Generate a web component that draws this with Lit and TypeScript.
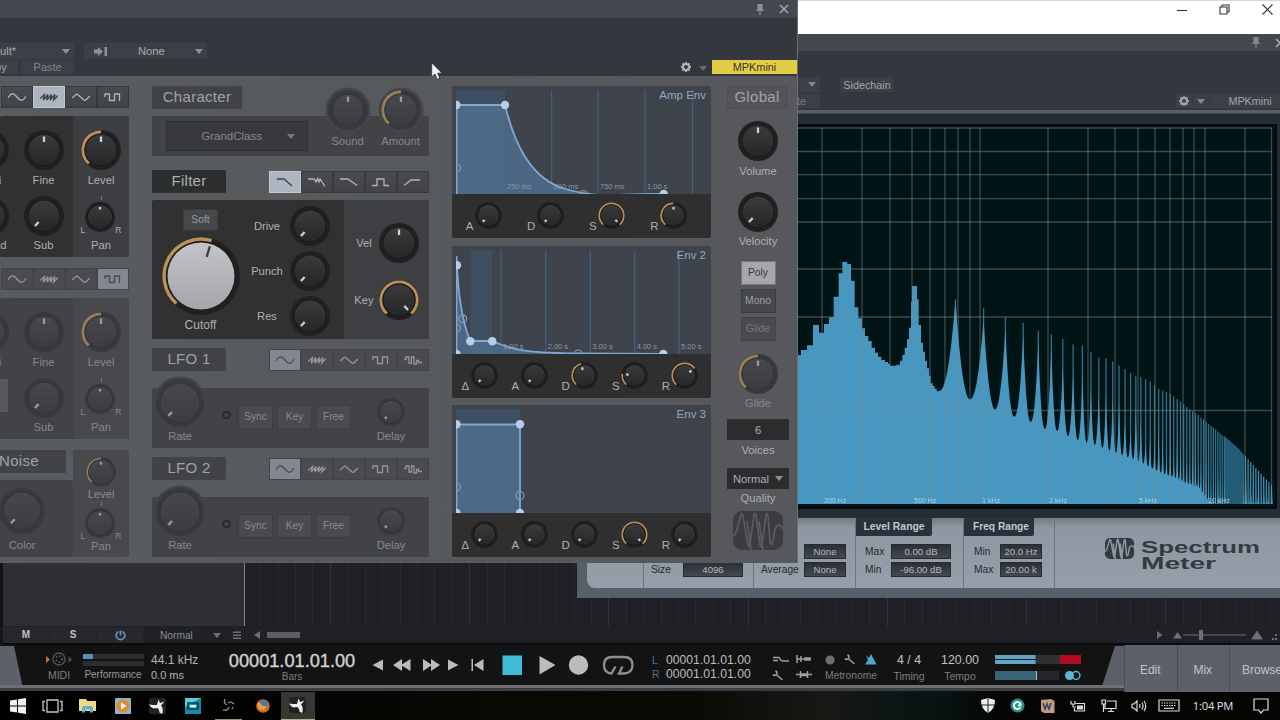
import { LitElement, html, css, svg } from 'lit';
import { customElement, property } from 'lit/decorators.js';
import { classMap } from 'lit/directives/class-map.js';

const WAVES: Record<string, string> = {
  sine: 'M0 6C3 0 6 1 9 5S15 10 18 4',
  saw: 'M0 6.500L4.500 2.500L3.200 8L8 2.500L6.700 8L11.500 2.500L10.200 8L15 2.500L13.700 8L18 3.500',
  tri: 'M0 6L4 2.500Q5 1.800 6 2.800L12 8Q13 8.800 14 7.800L18 4',
  square: 'M1 5V2H5.500V8.500H10.500V2H15.500V9',
  random: 'M0 4.500H2V2H5V8H7.500V2H10V9H12.500V5.500H14.500V7.500H18',
  lp24: 'M1 2H8L16 9',
  lp24b: 'M0 2H6L8 5L9.500 1.500L11 5L12 2L17 9.500',
  lp12: 'M0 2H8L17 8.500',
  bp: 'M0 8.500H5V2H12V8.500H17',
  hp: 'M0 8.500L7 3H16',
};

const OSC_WAVES = ['sine', 'saw', 'tri', 'square'];
const LFO_WAVES = ['sine', 'saw', 'tri', 'square', 'random'];
const FILTERS = ['lp24', 'lp24b', 'lp12', 'bp', 'hp'];

@customElement('synth-knob')
export class SynthKnob extends LitElement {
  @property({ type: Number }) size = 40;
  @property({ type: Number }) value = 0;
  @property({ type: Boolean }) arc = false;
  @property({ type: Boolean }) big = false;

  static styles = css`
    :host {
      display: block;
      line-height: 0;
    }
    svg {
      display: block;
      overflow: visible;
    }
    .halo { fill: var(--halo, transparent); }
    .ring { fill: var(--ring, #202021); }
    .edge { fill: var(--edge, #171718); }
    .a { stop-color: var(--cap-a, #3a3b3d); }
    .b { stop-color: var(--cap-b, #252627); }
    .la { stop-color: #c3c4c8; }
    .lb { stop-color: #a5a6ab; }
    .arc {
      fill: none;
      stroke: var(--arc, #be9058);
    }
    .tick { stroke: var(--tick, #d0d0d0); }
    .dark { stroke: #3c3c3e; }
  `;

  render() {
    const r = this.size / 2;
    const small = r < 16;
    const cap = this.big ? r - 5.5 : small ? r - 3 : r - 4.5;
    const w = this.big ? 3.4 : small ? 2 : 2.8;
    const ar = r - w / 2 - 0.4;
    const angle = -138 + this.value * 276;
    const at = (deg: number) => {
      const rad = (deg * Math.PI) / 180;
      return `${(Math.sin(rad) * ar).toFixed(2)} ${(-Math.cos(rad) * ar).toFixed(2)}`;
    };
    return html`
      <svg width=${this.size} height=${this.size} viewBox="${-r} ${-r} ${this.size} ${this.size}">
        <defs>
          <linearGradient id="cap" x1="0" y1="0" x2="0" y2="1">
            <stop offset="0" class=${this.big ? 'la' : 'a'}></stop>
            <stop offset="1" class=${this.big ? 'lb' : 'b'}></stop>
          </linearGradient>
        </defs>
        <circle class="halo" r=${r + 2.5}></circle>
        <circle class="ring" r=${r}></circle>
        ${this.arc
          ? svg`<path class="arc" stroke-width=${w}
              d="M${at(-138)}A${ar} ${ar} 0 ${angle > 42 ? 1 : 0} 1 ${at(angle)}"></path>`
          : ''}
        <circle class="edge" r=${cap + 0.8}></circle>
        <circle r=${cap} fill="url(#cap)"></circle>
        <line
          class="tick ${this.big ? 'dark' : ''}"
          stroke-width=${small ? 2.2 : 2.3}
          transform="rotate(${angle})"
          x1="0" x2="0"
          y1=${this.big ? -r + 8 : -cap + 2}
          y2=${this.big ? -r + 19 : small ? -cap + 4.6 : -cap + 7.5}
        ></line>
      </svg>
    `;
  }
}

const steps = [
  [0, 345], [36, 330], [54, 316], [72, 255], [90, 278], [105, 252], [120, 232], [134, 170],
  [149, 100], [160, 66], [175, 72], [186, 122], [197, 202], [208, 235], [219, 265], [228, 288],
  [238, 303], [248, 323], [258, 338], [267, 350], [277, 360], [288, 366], [297, 371], [303, 377],
  [322, 374], [333, 362], [340, 345], [347, 323], [354, 298], [360, 263], [366, 185], [369, 138],
  [384, 178], [389, 255], [396, 308], [402, 335], [408, 362], [414, 385], [420, 408], [425, 430],
  [431, 438], [437, 446], [443, 453],
].map(([x, y]) => [x / 3 + 790, y / 3 + 240]);

const crest = [
  [956, 299], [984, 308], [1006, 317.5], [1024, 323], [1039, 330.5], [1053, 334.5], [1064, 339],
  [1074, 344.5], [1084, 345.5], [1092, 352], [1100, 358], [1107, 358], [1114, 362], [1126, 369],
  [1138, 377], [1142, 377], [1152, 382], [1160, 389], [1172, 394], [1182, 402], [1190, 409],
  [1198, 414], [1207, 421.7], [1215, 428], [1223, 435], [1230, 440], [1240, 449], [1248, 458],
  [1257, 468], [1265, 477], [1273, 485],
];

const floor = [
  [939, 391], [972, 400], [995, 409.5], [1016, 417], [1032, 422], [1046, 429], [1059, 431],
  [1070, 436.5], [1079, 440], [1096, 445], [1117, 453], [1139, 461], [1163, 473], [1180, 479],
  [1187, 483], [1200, 487], [1208, 499], [1214, 504], [1280, 504],
];

function lerp(table: number[][], x: number) {
  const i = table.findIndex(p => p[0] >= x);
  if (i < 0) return table[table.length - 1][1];
  if (i === 0) return table[0][1];
  const [x0, y0] = table[i - 1];
  const [x1, y1] = table[i];
  return y0 + ((y1 - y0) * (x - x0)) / (x1 - x0);
}

const harmonic = (n: number) => 981.5 + 225 * Math.log10(0.258 * n);

function buildSpectrum() {
  let body = 'M790 504';
  let y = 504;
  for (const [x, ny] of steps) {
    body += `L${x} ${y}L${x} ${ny}`;
    y = ny;
  }
  let spikes = '';
  for (let n = 3; n <= 77; n++) {
    const x = harmonic(n);
    const left = (harmonic(n - 1) + x) / 2 + (n === 3 ? 3 : 0);
    const right = (x + harmonic(n + 1)) / 2 + (n < 5 ? 1.5 : 0);
    const top = lerp(crest, x);
    const base = lerp(floor, left);
    const nextBase = lerp(floor, right);
    let share = n < 4 ? 1 : n < 9 ? 0.88 : n < 12 ? 0.7 : n < 17 ? 0.6 : 0.42;
    if (n > 17) share += [0.1, -0.15, 0.02, -0.1, 0.25][n % 5];
    if (x > 1226 && x < 1244) share = 0;
    if (x >= 1244) share = [0.1, 0.7, 0.3, 0.95][n % 4];
    const peak = base - (base - top) * share;
    const bend = x > 1150 ? 3.5 : 2.3;
    for (let t = 0; t <= 1; t += 0.125) {
      body += `L${(left + (x - left) * t).toFixed(1)} ${(base - (base - peak) * Math.pow(t, bend)).toFixed(1)}`;
    }
    for (let t = 0.125; t <= 1; t += 0.125) {
      body += `L${(x + (right - x) * t).toFixed(1)} ${(nextBase - (nextBase - peak) * Math.pow(1 - t, bend)).toFixed(1)}`;
    }
    if (x < 1226) spikes += `M${x.toFixed(1)} ${top}V${base}`;
  }
  // harmonics run together up here, so the gaps fill in
  const tail = 'M1225 504V436L1230 440L1240 449L1245 455V504Z';
  let late = '';
  for (let x = 1246.5; x < 1273; x += 2.6) late += `M${x} ${lerp(crest, x)}V504`;
  return { body: body + 'L1273 504Z', spikes, tail, late };
}

const spectrum = buildSpectrum();
const GRID_X = [823, 863, 891, 913, 931, 946, 959, 971, 981, 1049, 1089, 1116, 1139, 1156, 1171, 1184, 1195, 1206, 1246, 1272.5];
const GRID_Y = [128, 151.5, 174.7, 198.7, 222, 269, 317, 410.5];
const FREQS: [number, string][] = [[825, '200 Hz'], [915, '500 Hz'], [983, '1 kHz'], [1050, '2 kHz'], [1140, '5 kHz'], [1209, '10 kHz']];

@customElement('spectrum-view')
export class SpectrumView extends LitElement {
  static styles = css`
    :host { display: block; }
    svg { display: block; }
    .bg { fill: #001416; }
    .body { fill: #4797c0; }
    .dimmed { fill: #255c75; }
    .spike { stroke: #2f708c; stroke-width: 1.3; fill: none; }
    .late { stroke: #4290b6; stroke-width: 1.2; fill: none; }
    .grid { stroke: #7f8685; stroke-opacity: 0.48; stroke-width: 1.3; }
    text {
      font: 7px 'Liberation Sans', sans-serif;
      fill: #c6dbe6;
      fill-opacity: 0.85;
    }
  `;

  render() {
    return html`
      <svg width="686" height="380" viewBox="590 126 686 380">
        <rect class="bg" x="590" y="126" width="686" height="380"></rect>
        <path class="dimmed" d=${spectrum.tail}></path>
        <path class="spike" d=${spectrum.spikes}></path>
        <path class="late" d=${spectrum.late}></path>
        <path class="body" d=${spectrum.body}></path>
        ${GRID_X.map(x => svg`<line class="grid" x1=${x} x2=${x} y1="128" y2="504"></line>`)}
        ${GRID_Y.map(y => svg`<line class="grid" x1="590" x2="1273" y1=${y} y2=${y}></line>`)}
        ${FREQS.map(([x, t]) => svg`<text x=${x} y="502.500">${t}</text>`)}
      </svg>
    `;
  }
}

interface Env {
  title: string;
  band: number[];
  fill: string;
  line: string;
  grid: [number, string?][];
  dots: number[][];
  rings: number[][];
  knobs: [string, number, boolean][];
}

const ENVS: Env[] = [
  {
    title: 'Amp Env',
    band: [0, 49],
    fill: 'M0 15H49C58 52 74 90 111 99.500S156 103.500 207 104H0Z',
    line: 'M.5 104V15H49C58 52 74 90 111 99.500S156 103.500 207 104',
    grid: [[49, '250 ms'], [95.7, '500 ms'], [142, '750 ms'], [189, '1.00 s'], [236.7]],
    dots: [[0.5, 15], [49, 15], [207.7, 104]],
    rings: [[0.5, 78], [127.5, 104.5]],
    knobs: [['A', 0, false], ['D', 0, false], ['S', 1, true], ['R', 0.5, true]],
  },
  {
    title: 'Env 2',
    band: [14.3, 36.3],
    fill: 'M0 8C2 50 7 78 14.300 91H36.300C60 102 80 103 122 103.500L207 104H0Z',
    line: 'M.5 104V6C2 50 7 74 14.300 91H36.300C60 102 80 103 122 103.500L207 104',
    grid: [[45, '1.00 s'], [89.7, '2.00 s'], [134.3, '3.00 s'], [178.7, '4.00 s'], [223, '5.00 s']],
    dots: [[1, 15.3], [0.5, 104], [14.3, 91.2], [36.3, 91.2], [207.3, 104]],
    rings: [[0.5, 78], [6.7, 68.8], [122.3, 104]],
    knobs: [['∆', 0, false], ['A', 0, false], ['D', 0.44, true], ['S', 0.2, true], ['R', 0.7, true]],
  },
  {
    title: 'Env 3',
    band: [0, 64],
    fill: 'M0 15H64V104H0Z',
    line: 'M.5 104V15.500H64V104',
    grid: [],
    dots: [[0.5, 15.3], [64, 15.3], [0.5, 104], [64, 104]],
    rings: [[0.5, 78], [64, 86.5]],
    knobs: [['∆', 0, false], ['A', 0, false], ['D', 0, false], ['S', 1, true], ['R', 0, false]],
  },
];

const pinIcon = () => html`<svg width="10" height="11" viewBox="0 0 10 11"><path class="ic" d="M2.500 0H7.500V5L9 7H5.600V11H4.400V7H1L2.500 5Z"></path></svg>`;
const closeIcon = () => html`<svg width="10" height="10" viewBox="0 0 10 10"><path class="st" d="M1 1L9 9M9 1L1 9"></path></svg>`;
const gearIcon = () => html`<svg width="12" height="12" viewBox="-6 -6 12 12">
  <circle class="gear" r="3"></circle>
  ${[0, 45, 90, 135].map(a => svg`<path class="teeth" transform="rotate(${a})" d="M0 -5V-3.500M0 3.500V5"></path>`)}
</svg>`;
const downIcon = () => html`<svg width="8" height="5" viewBox="0 0 8 5"><path class="ic" d="M0 0H8L4 5Z"></path></svg>`;
const logoIcon = (w: number, h: number) => html`<svg width=${w} height=${h} viewBox="0 0 50 39" preserveAspectRatio="none">
  <rect class="logo-bg" width="50" height="39" rx="9"></rect>
  <path class="logo-line" d="M0 25Q3 24 5 14L8 4Q9 1 10 5L15 34Q16 37 17 33L21 4Q22 0 23 4L27 34Q28 38 29 34L33 4Q34 1 35 5L37 30Q38 37 40 30L42 18Q46 10 50 18M14 10L18 39M26 10L30 39"></path>
</svg>`;
const wrenchIcon = () => html`<svg width="12" height="11" viewBox="0 0 12 11"><path class="st" d="M1 4.500Q2 6 4.500 4.800L10.500 10M4.500 4.800Q6 2 3.500 1"></path></svg>`;
const starIcon = () => html`<svg width="17" height="16" viewBox="0 0 17 16">
  <rect width="17" height="16" rx="2" fill="#222"></rect>
  <path fill="#eee" d="M0 6.500L4 7L8 7L9.500 1.500L11 5L15.500 3.500L12 7.500Q15 11 13 16L10.500 14.500Q10.500 11.500 8.500 10L4.500 10.500Q2 10 0 6.500Z"></path>
</svg>`;

@customElement('synth-window')
export class SynthWindow extends LitElement {
  static styles = css`
    :host {
      display: flex;
      flex-direction: column;
      width: 797px;
      height: 563px;
      overflow: hidden;
      background: linear-gradient(90deg, #585b5f, #56585b);
      color: #aeafb1;
      font: 11.2px/14px 'Liberation Sans', Arial, sans-serif;
      box-shadow: 1px 0 0 #6d6e70;
      white-space: nowrap;
    }
    .ic { fill: #8e9095; }
    .st { fill: none; stroke: #a2a4a8; stroke-width: 1.7; }
    .gear { fill: none; stroke: #b3b5b8; stroke-width: 2; }
    .teeth { stroke: #b3b5b8; stroke-width: 1.8; }
    .title {
      flex: none;
      height: 18px;
      background: #454850;
      display: flex;
      justify-content: flex-end;
      align-items: center;
      gap: 14px;
      padding-right: 8px;
    }
    .tools {
      flex: none;
      height: 58px;
      background: #35373e;
      display: flex;
      justify-content: space-between;
    }
    .presets { padding-top: 25px; }
    .row { display: flex; }
    .cell {
      background: #3d3f46;
      display: flex;
      align-items: center;
    }
    .cell.top { height: 16px; margin-bottom: 1px; }
    .cell.low { height: 14px; color: #808389; }
    .preset { width: 70px; padding-right: 4px; justify-content: space-between; color: #a9abae; }
    .link { width: 119px; margin-left: 10px; padding: 0 4px 0 0; color: #a9abae; }
    .link svg:first-child { margin: 0 31px 0 10px; }
    .link span { flex: 1; }
    .copy { width: 18px; margin-right: 3px; justify-content: flex-start; }
    .copy span { margin-left: -5px; color: #a0a2a6; }
    .paste { width: 53px; justify-content: center; }
    .device { display: flex; align-items: center; height: 14px; margin-top: 42px; }
    .device .sep { margin: 0 5px 0 7px; opacity: .6; }
    .tag {
      width: 85px;
      height: 14px;
      text-align: center;
      background: #e3cc45;
      color: #35342a;
      font-size: 10.9px;
    }
    .body { display: flex; align-items: flex-start; padding-top: 10px; }
    .oscs { width: 129px; overflow: hidden; }
    .mid { width: 277px; margin-left: 23px; }
    .envs { width: 259px; margin-left: 23px; }
    .global { width: 62px; margin-left: 16px; }
    .off {
      --ring: #38393c;
      --edge: #313235;
      --cap-a: #47484c;
      --cap-b: #3b3c40;
      --arc: #9a7c58;
      --tick: #9a9b9e;
      color: #87888b;
    }

    .waves { display: flex; height: 22px; }
    .waves span {
      flex: 1;
      display: flex;
      align-items: center;
      justify-content: center;
      background: linear-gradient(#4a4b4f, #424347);
      box-shadow: inset 0 0 0 1px #38393c;
    }
    .waves path { fill: none; stroke: #b3b4b6; stroke-width: 1.3; }
    .waves .sel { background: #adb5c0; box-shadow: inset 0 0 0 1px #c0c8d2; }
    .waves .sel path { stroke: #3c3f44; }
    .off .waves span { background: #494b4f; box-shadow: inset 0 0 0 1px #434448; }
    .off .waves path { stroke: #94969a; }
    .off .waves .sel { background: #83878f; }
    .off .waves .sel path { stroke: #474a50; }

    .panel { display: flex; border-radius: 2px; overflow: hidden; background: #313132; }
    .off .panel, .off.panel { background: #424347; }
    .osc { padding-left: 1px; }
    .osc .panel { height: 141px; margin: 8px 0 11px -1px; }
    .osc .main { width: 111px; margin-left: -39px; flex: none; padding-right: 1px; }
    .side { width: 56px; background: #3d3e41; padding-top: 14px; }
    .off .side { background: #48494c; }
    .main { padding-top: 14px; }
    .main .row > *, .side > * { width: 55px; }
    .side > * { width: 56px; }
    .knob { display: flex; flex-direction: column; align-items: center; gap: 3px; }
    .second { margin-top: 9px; gap: 2px; }
    .pan {
      height: 40px;
      display: flex;
      align-items: flex-end;
      gap: 0;
      font-size: 8.5px;
      line-height: 11px;
      background: linear-gradient(#77787a, #77787a) no-repeat 50% 0 / 1px 4px;
    }
    .pan synth-knob { margin-bottom: 4px; }
    .square {
      width: 29px;
      height: 33px;
      margin: 1px 0 6px 9px;
      background: #57585b;
    }
    .noise { display: flex; }
    .noise .head { width: 66px; text-align: left; text-indent: -1px; }
    .noise .panel { display: block; width: 73px; height: 77px; margin-top: 7px; padding-top: 8px; box-sizing: border-box; }
    .noise .knob.color { margin-left: -29px; gap: 4px; }
    .noise .side { background: #48494c; height: 107px; padding-top: 7px; box-sizing: border-box; border-radius: 2px; }
    .noise .side .knob { gap: 0; }
    .noise .side .second { margin-top: 1px; }
    .noise .side .second > span { margin-top: -3px; }

    .head {
      width: 74px;
      height: 23px;
      line-height: 22px;
      text-align: center;
      font-size: 15px;
      letter-spacing: .3px;
      background: #2d2e2f;
      color: #a9b0ab;
      border-radius: 1px;
    }
    .off .head { background: #424347; color: #a0a3a2; }
    .bar { display: flex; justify-content: space-between; height: 23px; }
    .bar .waves { width: 160px; margin-top: 1px; }
    .character .head { width: 90px; }
    .character .panel { height: 40px; margin-top: 7px; overflow: visible; }
    .drop {
      width: 142px;
      height: 30px;
      box-sizing: border-box;
      border: 1px solid #2f3032;
      background: #37393d;
      margin: 5px 0 0 14px;
      display: flex;
      align-items: center;
      justify-content: flex-end;
      gap: 25px;
      padding-right: 12px;
      font-size: 11.5px;
    }
    .character .ic { fill: #77797d; }
    .character .knob { width: 53px; margin-top: -26px; gap: 4px; --halo: #45464a; }
    .character .knob:nth-child(2) { margin-left: 13px; }
    .character { margin-bottom: 14px; }

    .filter .panel { height: 139px; margin: 7px 0 9px; }
    .filter .cut { width: 97px; display: flex; flex-direction: column; align-items: center; padding-top: 10px; }
    .btn {
      width: 33px;
      height: 20px;
      line-height: 20px;
      text-align: center;
      font-size: 10.3px;
      background: #47484c;
      box-shadow: 0 0 0 1px #3a3b3d;
      color: #97989b;
    }
    .cut .knob { gap: 3px; margin-top: 7px; font-size: 12px; }
    .drives { width: 95px; padding-top: 3px; }
    .side-knob { display: flex; align-items: center; height: 45px; }
    .side-knob span { flex: 1; text-align: center; }
    .drives .side-knob { padding-right: 14px; margin-left: -4px; }
    .drives .side-knob span { padding-right: 1px; }
    .filter .mods { width: 85px; padding-top: 14px; background: #3e3f43; }
    .mods .side-knob { height: 57px; padding: 0 10px 0 5px; }

    .lfo .panel { height: 60px; margin: 17px 0 9px; overflow: visible; align-items: flex-start; }
    .lfo .rate { width: 56px; margin-top: -9px; gap: 2px; --halo: #424347; }
    .led { width: 5px; height: 4px; border: 2px solid #2c2d30; border-radius: 5px; margin: 23px 8px 0 14px; }
    .lfo .btn { margin: 18px 6px 0 0; height: 22px; line-height: 22px; background: #4a4b4f; box-shadow: 0 0 0 1px #3d3e41; color: #88898c; }
    .lfo .delay { width: 60px; margin: 10px 0 0 5px; gap: 3px; }

    .env { height: 152px; margin-bottom: 7.5px; background: #2f2f30; border-radius: 2px; overflow: hidden; }
    .graph { background: #3f434b; padding: 4px 0 0 4px; height: 104px; }
    .graph svg { display: block; }
    .band { fill: #3d4f60; }
    .shape { fill: #4f6d8d; fill-opacity: .85; }
    .curve { fill: none; stroke: #7fa9d3; stroke-width: 1.8; }
    .tickline { stroke: #456689; stroke-width: 1; }
    .dot { fill: #b4cdea; }
    .hollow { fill: none; stroke: #7b9fc4; stroke-width: 1.2; }
    .graph text { font-size: 7.5px; fill: #8796a8; }
    .graph .name { font-size: 11.5px; fill: #8fa9c6; }
    .env .adsr { display: flex; height: 44px; margin-left: -1px; }
    .adsr div { flex: none; width: 50.2px; display: flex; align-items: flex-start; justify-content: flex-end; }
    .adsr.four { margin-left: -8px; }
    .adsr.four div { width: 61.6px; }
    .adsr synth-knob { margin: 8px 3.500px 0 0; }
    .adsr div span { margin-top: 25px; width: 11px; text-align: center; font-size: 11.5px; }

    .global { display: flex; flex-direction: column; align-items: center; }
    .global .head { width: 60px; background: #525457; box-shadow: inset 0 0 0 1px #4c4e51; color: #a2a5a6; align-self: flex-start; }
    .global .knob { margin-top: 12px; gap: 2.500px; }
    .global .knob + .knob { margin-top: 14px; }
    .global .off .knob { margin-top: 13.500px; }
    .global .btn { margin-top: 6px; height: 22px; line-height: 22px; color: #a0a1a4; }
    .global .lit { margin-top: 14px; background: #a6a7ab; color: #36373a; box-shadow: 0 0 0 1px #77787b; }
    .global .mute { background: #4a4b4f; color: #77787b; box-shadow: 0 0 0 1px #434447; }
    .box {
      width: 62px;
      height: 21px;
      background: #2b2c2d;
      display: flex;
      align-items: center;
      justify-content: center;
      gap: 6px;
      margin: 9px 0 3px;
    }
    .box + span + .box { margin-top: 11px; margin-bottom: 2px; }
    .logo { margin-top: 6px; }
    .logo-bg { fill: #3b3c3f; }
    .logo-line { fill: none; stroke: #5a5c60; stroke-width: 1.7; }
  `;

  waves(names: string[], selected: number) {
    return html`<div class="waves">
      ${names.map((n, i) => html`
        <span class=${classMap({ sel: i === selected })}>
          <svg width="18" height="11" viewBox="0 0 18 11"><path d=${WAVES[n]}></path></svg>
        </span>`)}
    </div>`;
  }

  knob(label: string, value: number, arc = false, cls = '', size = 40) {
    return html`<div class="knob ${cls}">
      <synth-knob .size=${size} .value=${value} .arc=${arc}></synth-knob>
      <span>${label}</span>
    </div>`;
  }

  pan() {
    return html`<div class="knob second">
      <div class="pan"><span>L</span><synth-knob .size=${30} .value=${0.5}></synth-knob><span>R</span></div>
      <span>Pan</span>
    </div>`;
  }

  osc(off: boolean, selected: number) {
    return html`<div class="osc ${off ? 'off' : ''}">
      ${this.waves(OSC_WAVES, selected)}
      <div class="panel">
        <div class="main">
          <div class="row">${this.knob('Semi', 0.5)}${this.knob('Fine', 0.5)}</div>
          <div class="row">
            ${off
              ? html`<div class="knob second"><div class="square"></div></div>`
              : this.knob('Spread', 0, false, 'second')}
            ${this.knob('Sub', 0, false, 'second')}
          </div>
        </div>
        <div class="side">${this.knob('Level', 0.5, true)}${this.pan()}</div>
      </div>
    </div>`;
  }

  sideKnob(label: string, value: number, arc = false) {
    return html`<div class="side-knob">
      <span>${label}</span>
      <synth-knob .size=${40} .value=${value} .arc=${arc}></synth-knob>
    </div>`;
  }

  lfo(title: string) {
    return html`<div class="lfo off">
      <div class="bar"><div class="head">${title}</div>${this.waves(LFO_WAVES, 0)}</div>
      <div class="panel">
        ${this.knob('Rate', 0, false, 'rate', 48)}
        <div class="led"></div>
        ${['Sync', 'Key', 'Free'].map(t => html`<div class="btn">${t}</div>`)}
        ${this.knob('Delay', 0, false, 'delay', 28)}
      </div>
    </div>`;
  }

  env(e: Env) {
    return html`<div class="env">
      <div class="graph">
        <svg width="254" height="104" viewBox="0 0 254 104">
          <rect class="band" x=${e.band[0]} y="0" width=${e.band[1] - e.band[0]} height="104"></rect>
          <path class="shape" d=${e.fill}></path>
          ${e.grid.map(([x, t]) => svg`
            ${x === e.band[1] ? '' : svg`<line class="tickline" x1=${x} x2=${x} y1="0" y2="104"></line>`}
            ${t ? svg`<text x=${x + 2} y="98.500">${t}</text>` : ''}`)}
          <path class="curve" d=${e.line}></path>
          ${e.rings.map(([x, y]) => svg`<circle class="hollow" cx=${x} cy=${y} r="4"></circle>`)}
          ${e.dots.map(([x, y]) => svg`<circle class="dot" cx=${x} cy=${y} r="4.200"></circle>`)}
          <text class="name" x="250" y="9" text-anchor="end">${e.title}</text>
        </svg>
      </div>
      <div class="adsr ${e.knobs.length === 4 ? 'four' : ''}">
        ${e.knobs.map(([label, v, arc]) => html`
          <div><span>${label}</span><synth-knob .size=${27} .value=${v} .arc=${arc}></synth-knob></div>`)}
      </div>
    </div>`;
  }

  render() {
    return html`
      <div class="title">${pinIcon()}${closeIcon()}</div>
      <div class="tools">
        <div class="presets">
          <div class="row">
            <div class="cell top preset"><span>ult*</span>${downIcon()}</div>
            <div class="cell top link">
              <svg width="13" height="9" viewBox="0 0 13 9"><path class="ic" d="M0 2.500H4V0L9 4.500L4 9V6.500H0ZM10.500 0H13V9H10.500Z"></path></svg>
              <span>None</span>${downIcon()}
            </div>
          </div>
          <div class="row">
            <div class="cell low copy"><span>py</span></div>
            <div class="cell low paste">Paste</div>
          </div>
        </div>
        <div class="device">${gearIcon()}<span class="sep">${downIcon()}</span><div class="tag">MPKmini</div></div>
      </div>
      <div class="body">
        <div class="oscs">
          ${this.osc(false, 1)}
          ${this.osc(true, 3)}
          <div class="noise off">
            <div>
              <div class="head">Noise</div>
              <div class="panel">${this.knob('Color', 0, false, 'color', 46)}</div>
            </div>
            <div class="side">${this.knob('Level', 0.5, true, '', 30)}${this.pan()}</div>
          </div>
        </div>

        <div class="mid">
          <div class="character off">
            <div class="head">Character</div>
            <div class="panel">
              <div class="drop"><span>GrandClass</span>${downIcon()}</div>
              ${this.knob('Sound', 0.5)}${this.knob('Amount', 0.5, true)}
            </div>
          </div>
          <div class="filter">
            <div class="bar"><div class="head">Filter</div>${this.waves(FILTERS, 0)}</div>
            <div class="panel">
              <div class="cut">
                <div class="btn">Soft</div>
                <div class="knob">
                  <synth-knob .size=${78} .value=${0.56} .arc=${true} .big=${true}></synth-knob>
                  <span>Cutoff</span>
                </div>
              </div>
              <div class="drives">
                ${this.sideKnob('Drive', 0)}${this.sideKnob('Punch', 0)}${this.sideKnob('Res', 0)}
              </div>
              <div class="mods">${this.sideKnob('Vel', 0.5)}${this.sideKnob('Key', 1, true)}</div>
            </div>
          </div>
          ${this.lfo('LFO 1')}
          ${this.lfo('LFO 2')}
        </div>

        <div class="envs">${ENVS.map(e => this.env(e))}</div>

        <div class="global">
          <div class="head">Global</div>
          ${this.knob('Volume', 0.5)}
          ${this.knob('Velocity', 0)}
          <div class="btn lit">Poly</div>
          <div class="btn">Mono</div>
          <div class="btn mute">Glide</div>
          <div class="off">${this.knob('Glide', 0.5, true)}</div>
          <div class="box">6</div>
          <span>Voices</span>
          <div class="box">Normal ${downIcon()}</div>
          <span>Quality</span>
          <div class="logo">${logoIcon(50, 39)}</div>
        </div>
      </div>
    `;
  }
}

@customElement('meter-window')
export class MeterWindow extends LitElement {
  static styles = css`
    :host {
      display: flex;
      flex-direction: column;
      width: 713px;
      height: 564px;
      overflow: hidden;
      background: #566068;
      color: #a3a5a8;
      font: 10.8px/14px 'Liberation Sans', Arial, sans-serif;
      white-space: nowrap;
    }
    .ic { fill: #85878b; }
    .st { fill: none; stroke: #a2a4a8; stroke-width: 1.7; }
    .gear { fill: none; stroke: #a3a5a8; stroke-width: 2; }
    .teeth { stroke: #a3a5a8; stroke-width: 1.8; }
    .title {
      height: 17px;
      background: #44474e;
      display: flex;
      justify-content: flex-end;
      align-items: center;
      gap: 14px;
      padding-right: 5px;
    }
    .tools {
      height: 59px;
      background: #35373e;
      display: flex;
      justify-content: space-between;
    }
    .left { padding: 26px 0 0 163px; }
    .row { display: flex; gap: 20px; }
    .cell { background: #3d3f46; height: 15px; display: flex; align-items: center; justify-content: flex-end; }
    .row .cell { margin-bottom: 2px; }
    .preset { width: 76px; padding-right: 4px; }
    .side { width: 54px; justify-content: center; }
    .paste { width: 66px; padding-right: 14px; height: 14px; color: #75787e; }
    .right { display: flex; gap: 1px; margin-top: 43px; }
    .right .cell { height: 14px; width: 16px; justify-content: center; }
    .right .cell:last-child { width: 80px; }
    .screen { margin-top: 4px; background: #262c34; padding: 10px 0 0 10px; height: 394px; box-shadow: 0 -1px 0 #3e464e; }
    .frame { width: 686px; border: 2px solid #020b10; border-bottom-width: 3px; }
    .controls {
      display: flex;
      height: 70px;
      margin-left: 10px;
      border-radius: 0 0 0 8px;
      background: linear-gradient(#737c85, #8e98a3 14%, #959fa9);
      color: #24282c;
      font-size: 10.2px;
    }
    .sec { box-sizing: border-box; padding-top: 25px; box-shadow: inset -1px 0 0 #6b747d; }
    .a { width: 57px; }
    .b { width: 110px; padding-left: 7px; }
    .c { width: 102px; padding-left: 7px; }
    .d { width: 108px; }
    .e { width: 91px; }
    .d, .e { padding-top: 0; }
    .tab {
      height: 18px;
      line-height: 18px;
      background: #29323a;
      color: #c3c7ca;
      font-size: 10.4px;
      font-weight: bold;
      text-align: center;
      border-bottom-right-radius: 2px;
      margin-bottom: 7px;
    }
    .d .tab { width: 76px; }
    .e .tab { width: 66px; font-size: 10.2px; padding-left: 4px; }
    .line { display: flex; align-items: center; justify-content: space-between; height: 16px; margin-bottom: 2px; }
    .line span { padding-top: 1px; }
    .d .line { padding: 0 13px 0 9px; }
    .e .line { padding: 0 13px 0 10px; }
    .b .line { padding-right: 11px; }
    .c .line { padding-right: 10px; }
    .c .line.only { justify-content: flex-end; }
    .val {
      box-sizing: border-box;
      height: 15px;
      line-height: 13px;
      border: 1px solid #252a2f;
      background: linear-gradient(#2b3035, #434950);
      color: #b4b8bb;
      text-align: center;
      font-size: 9.6px;
    }
    .w41 { width: 42px; }
    .w60 { width: 60px; }
    .brand { padding: 20px 0 0 50px; display: flex; gap: 7px; }
    .logo-bg { fill: #343a41; }
    .logo-line { fill: none; stroke: #929ca6; stroke-width: 2.4; }
    .brand text { font: bold 17px 'Liberation Sans', sans-serif; fill: #343a41; }
  `;

  render() {
    return html`
      <div class="title">${pinIcon()}${closeIcon()}</div>
      <div class="tools">
        <div class="left">
          <div class="row"><div class="cell preset">${downIcon()}</div><div class="cell side">Sidechain</div></div>
          <div class="cell paste">Paste</div>
        </div>
        <div class="right">
          <div class="cell">${gearIcon()}</div>
          <div class="cell">${downIcon()}</div>
          <div class="cell">MPKmini</div>
        </div>
      </div>
      <div class="screen"><div class="frame"><spectrum-view></spectrum-view></div></div>
      <div class="controls">
        <div class="sec a"></div>
        <div class="sec b">
          <div class="line"></div>
          <div class="line"><span>Size</span><div class="val w60">4096</div></div>
        </div>
        <div class="sec c">
          <div class="line only"><div class="val w41">None</div></div>
          <div class="line"><span>Average</span><div class="val w41">None</div></div>
        </div>
        <div class="sec d">
          <div class="tab">Level Range</div>
          <div class="line"><span>Max</span><div class="val w60">0.00 dB</div></div>
          <div class="line"><span>Min</span><div class="val w60">-96.00 dB</div></div>
        </div>
        <div class="sec e">
          <div class="tab">Freq Range</div>
          <div class="line"><span>Min</span><div class="val w41">20.0 Hz</div></div>
          <div class="line"><span>Max</span><div class="val w41">20.00 k</div></div>
        </div>
        <div class="brand">
          ${logoIcon(29, 21)}
          <svg width="122" height="36" viewBox="0 0 122 36">
            <text x="0" y="15" textLength="119" lengthAdjust="spacingAndGlyphs">Spectrum</text>
            <text x="0" y="30.500" textLength="75" lengthAdjust="spacingAndGlyphs">Meter</text>
          </svg>
        </div>
      </div>
    `;
  }
}

@customElement('app-root')
export class AppRoot extends LitElement {
  static styles = css`
    :host {
      display: block;
      position: relative;
      width: 1280px;
      height: 720px;
      overflow: hidden;
      background: #16171a;
      color: #b9babc;
      font: 11px/14px 'Liberation Sans', Arial, sans-serif;
      white-space: nowrap;
    }
    .desktop { display: flex; flex-direction: column; height: 720px; }
    svg { display: block; flex: none; }
    meter-window { position: absolute; left: 577px; top: 34px; }
    synth-window { position: absolute; left: 0; top: 0; }
    .cursor { position: absolute; left: 431px; top: 62px; }

    .caption {
      box-sizing: border-box;
      height: 34px;
      background: #fff;
      border-top: 1px solid #d8d8d8;
      display: flex;
      justify-content: flex-end;
      gap: 32px;
      padding: 3px 7px 0 0;
    }
    .caption path { fill: none; stroke: #333; stroke-width: 1.1; }
    .arrange { display: flex; height: 592px; padding-left: 3px; background: #121316; }
    .tracks { width: 241px; background: #2e2f34; border-right: 1px solid #86878a; }
    .lanes {
      flex: 1;
      background:
        repeating-linear-gradient(90deg, #34353a 0 1px, transparent 1px 139.200px) 85px 0 / 1253px 100%,
        repeating-linear-gradient(90deg, #282a2e 0 1px, #202126 1px 17.400px) 85px 0 / 1253px 100%;
    }
    .foot {
      display: flex;
      align-items: center;
      height: 16px;
      background: #202127;
      margin-left: 3px;
      padding-top: 1px;
      border-bottom: 2px solid #0b0b0d;
      color: #8b8c90;
    }
    .foot .tg {
      width: 46px;
      height: 16px;
      margin-right: 1px;
      background: #27282d;
      color: #c0c1c3;
      font-size: 10px;
      font-weight: bold;
      display: flex;
      justify-content: center;
      align-items: center;
    }
    .foot .mode { margin: 1px 18px 0 16px; font-size: 10.200px; width: 35px; }
    .foot .ic { fill: #6d6f74; }
    .thumb { width: 33px; height: 6px; background: #5c5e63; }
    .fill { flex: 1; }

    .transport { display: flex; height: 40px; background: #131313; }
    .wedge { fill: #5d6068; }
    .col { display: flex; flex-direction: column; align-items: center; }
    .dim { color: #7d7e80; }
    .midi { width: 50px; margin-left: 11px; padding-top: 6px; font-size: 10.500px; gap: 1px; }
    .perf { margin: 9px 0 0 -2px; width: 62px; color: #97989a; font-size: 10px; }
    .meter { width: 61px; height: 5px; background: #2c2d30; margin-bottom: 2px; }
    .meter i { display: block; height: 5px; width: 10px; background: #4c93b6; }
    .rate { margin: 8px 0 0 7px; width: 57px; font-size: 12px; line-height: 14.500px; color: #b3b4b6; }
    .rate small { font-size: 11px; }
    .time { margin-left: 14px; width: 140px; padding-top: 6px; font-size: 10px; line-height: 11px; }
    .time b { font-size: 18.200px; line-height: 20px; font-weight: normal; color: #d0d0d0; -webkit-text-stroke: .4px #d0d0d0; }
    .play { display: flex; align-items: center; height: 40px; margin-left: 9px; }
    .play .g { fill: #bcbcbc; }
    .loop { fill: none; stroke: #8f8f8f; stroke-width: 2.300; }
    .lr { margin: 8px 0 0 18px; width: 100px; font-size: 12.200px; line-height: 14px; color: #bdbebf; }
    .lr i { display: inline-block; width: 14px; font-style: normal; font-size: 10.500px; color: #4a7491; }
    .tiny { display: grid; grid-template-columns: 24px 27px; row-gap: 6px; padding-top: 10px; margin-left: 20px; height: 26px; }
    .tiny path, .st { fill: none; stroke: #a0a0a0; stroke-width: 1.500; }
    .metro { width: 56px; padding-top: 9px; gap: 4px; font-size: 10.300px; }
    .metro div { display: flex; align-items: center; gap: 9px; }
    .sig { width: 52px; margin-left: 4px; padding-top: 8px; gap: 2px; font-size: 10.500px; }
    .sig b { font-weight: normal; font-size: 12.400px; color: #c2c2c3; }
    .tempo { margin-left: -1px; }
    .levels { margin: 10px 0 0 9px; }
    .right {
      position: relative;
      flex: none;
      display: flex;
      width: 156px;
      height: 47px;
      overflow: hidden;
      color: #c2c3c5;
      font-size: 12px;
      line-height: 50px;
      text-align: center;
      background: #5d6068;
    }
    .right span { box-shadow: inset 1px 0 0 #4b4d54; width: 52.500px; flex: none; }
    .right span:last-child { width: 66px; }
    .base { height: 6px; background: linear-gradient(#6d6f73 0 3px, #3d3e44 3px); }

    .taskbar { flex: 1; display: flex; align-items: center; background: linear-gradient(90deg, #000 0, #030302 300px, #090a03 500px, #0b0b06 700px, #181815 830px, #0a1514 900px, #071110 950px, #050604 1000px, #050504); }
    .app { width: 35.100px; height: 28px; display: flex; align-items: center; justify-content: center; box-sizing: border-box; }
    .app.run { border-bottom: 1.500px solid #9a946c; width: 27px; margin: 0 4px; }
    .app.now { background: #383832; border-bottom: 1.500px solid #b3ac83; width: 34px; }
    .tray { display: flex; align-items: center; }
    .tray > * { width: 30.200px; display: flex; justify-content: center; }
    .tray .clock { width: 58px; font: 11.200px 'Open Sans', sans-serif; color: #e2e2e2; letter-spacing: -.2px; }
    .tray .note { width: 38px; }
    .tray .w { stroke: #dcdcdc; fill: none; stroke-width: 1.200; }
  `;

  renderTransport() {
    return html`<div class="transport">
      <svg width="23" height="41"><path class="wedge" d="M0 1H14L22.500 41H0Z"></path></svg>
      <div class="col midi dim">
        <svg width="27" height="16" viewBox="0 0 27 16">
          <path d="M0 5L4 8.500L0 12Z" fill="#c8703a"></path>
          <circle cx="13" cy="8" r="6" fill="none" stroke="#4f5052" stroke-width="1.500"></circle>
          <circle cx="13" cy="8" r="3" fill="none" stroke="#66686b" stroke-width="1.500" stroke-dasharray="1.500 2"></circle>
          <path d="M22.500 5L26 8.500L22.500 12Z" fill="#4d4e50"></path>
        </svg>
        MIDI
      </div>
      <div class="col perf">
        <div class="meter"><i></i></div>
        <div class="meter"></div>
        Performance
      </div>
      <div class="rate">44.1 kHz<br /><small>0.0 ms</small></div>
      <div class="col time dim"><b>00001.01.01.00</b>Bars</div>
      <div class="play">
        <svg width="263" height="24" viewBox="372 0 263 24">
          <path class="g" d="M384 6.500V17.500L373.500 12ZM403 6V18L394 12ZM411.500 6V18L402 12ZM424 6V18L433 12ZM432 6V18L441 12ZM449 6.500V17.500L459.500 12ZM472.500 6H474V18H472.500ZM484.500 6V18L475 12Z"></path>
          <rect x="503.500" y="2.500" width="19.500" height="19.500" fill="#3fbcd6"></rect>
          <path class="g" d="M540.500 3V21.500L556.500 12Z"></path>
          <circle class="g" cx="579.500" cy="12" r="9.700"></circle>
          <path class="loop" d="M616.500 13.500L612.500 20.500Q605 20 605 12Q605 4 613 4H625Q633.500 4 633.500 12Q633.500 20 625 20.500H620L623.500 13.500"></path>
        </svg>
      </div>
      <div class="lr"><i>L</i>00001.01.01.00<br /><i>R</i>00001.01.01.00</div>
      <div class="tiny">
        <svg width="17" height="9" viewBox="0 0 17 9"><path d="M1 2.500H7Q9 6 11 6H17M1 5.500H6" ></path></svg>
        <svg width="17" height="9" viewBox="0 0 17 9"><path d="M1 0V8M1 4H9M5 1V7M8 4H15M9 3H14V5H9Z"></path></svg>
        ${wrenchIcon()}
        <svg width="17" height="9" viewBox="0 0 17 9"><path d="M0 4.500H16M4.500 1V8M11.500 1V8M6 4H10V5.500H6Z"></path></svg>
      </div>
      <div class="col metro dim">
        <div>
          <svg width="10" height="10"><circle cx="5" cy="5" r="4.500" fill="#6e6e70"></circle></svg>
          ${wrenchIcon()}
          <svg width="12" height="11" viewBox="0 0 12 11"><path fill="#4fa9cc" d="M1 1L4 4L6 0L11.500 10.500H0L3 6Z"></path></svg>
        </div>
        Metronome
      </div>
      <div class="col sig dim"><b>4 / 4</b>Timing</div>
      <div class="col sig tempo dim"><b>120.00</b>Tempo</div>
      <svg class="levels" width="87" height="28" viewBox="0 0 87 28">
        <path fill="#2f3033" d="M40 0H65V9H40Z"></path>
        <path fill="#5ea6c6" d="M0 0H40.500V4H0ZM0 5H40.500V9H0Z"></path>
        <path fill="#b00c22" d="M65 0H86V9H65Z"></path>
        <path fill="#26272a" d="M42 16H64V25H42Z"></path>
        <path fill="#396476" d="M0 16H41V25H0Z"></path>
        <path stroke="#9fc6d6" d="M41.500 16V25"></path>
        <circle cx="74.500" cy="20.500" r="4.500" fill="#58b7d6"></circle>
        <circle cx="81" cy="20.500" r="3.900" fill="none" stroke="#58b7d6" stroke-width="1.500"></circle>
      </svg>
      <div class="fill"></div>
      <svg width="22" height="41"><path class="wedge" d="M13 1H22V41H0Z"></path></svg>
      <div class="right"><span>Edit</span><span>Mix</span><span>Browse</span></div>
    </div>`;
  }

  renderTaskbar() {
    return html`<div class="taskbar">
      <div class="app"><svg width="16" height="16" viewBox="0 0 16 16"><path fill="#f0f0f0" d="M0 2.500L7 1.500V7.500H0ZM8 1.300L16 0V7.500H8ZM0 8.500H7V14.500L0 13.500ZM8 8.500H16V16L8 14.700Z"></path></svg></div>
      <div class="app"><svg width="21" height="14" viewBox="0 0 21 14"><path fill="none" stroke="#c8c8c8" stroke-width="1.300" d="M5 1H16V13H5ZM3 2.500H1V11.500H3M18 2.500H20V11.500H18"></path></svg></div>
      <div class="app"><svg width="17" height="15" viewBox="0 0 17 15"><path fill="#f3d884" d="M0 1H7L8.500 3H17V13H0Z"></path><path fill="#58b4dd" d="M3 14.500V9.500Q3 8 5 8H12Q14 8 14 9.500V14.500H11V11.500H6V14.500Z"></path></svg></div>
      <div class="app"><svg width="16" height="16" viewBox="0 0 16 16"><rect width="16" height="16" rx="1" fill="#8db6cf"></rect><circle cx="8" cy="8" r="6.500" fill="#e08a2c"></circle><path fill="#fff" d="M6 4.500L11.500 8L6 11.500Z"></path></svg></div>
      <div class="app">${starIcon()}</div>
      <div class="app"><svg width="16" height="16" viewBox="0 0 16 16"><rect width="16" height="16" fill="#158ba8"></rect><path fill="#4fd2de" d="M0 0H16L0 9Z"></path><path fill="none" stroke="#0c3c4c" stroke-width="1.600" d="M3 5H13V11H3Z"></path><rect x="5" y="7" width="6" height="2.500" fill="#e6fafa"></rect></svg></div>
      <div class="app run"><svg width="14" height="14" viewBox="0 0 14 14"><path fill="none" stroke="#8e8e8e" stroke-width="1.300" d="M4 1Q2 5 6 7M13 6Q10 3 7 5M2 12Q7 13 8 9M11 11L12 9"></path></svg></div>
      <div class="app"><svg width="14" height="14" viewBox="0 0 14 14"><circle cx="7" cy="7" r="6.800" fill="#d9632a"></circle><circle cx="7.500" cy="5.500" r="4.300" fill="#3b7fb2"></circle><path fill="#e8a13c" d="M1 4Q5 3 5.500 6Q8 8 11 7Q9 12 5 11Q1 9 1 4Z"></path></svg></div>
      <div class="app now">${starIcon()}</div>
      <div class="fill"></div>
      <div class="tray">
        <span><svg width="14" height="15" viewBox="0 0 14 15"><path fill="#eee" d="M7 0L14 2Q14 11 7 15Q0 11 0 2Z"></path><path stroke="#222" d="M7 0V15M0 7H14"></path></svg></span>
        <span><svg width="15" height="15" viewBox="0 0 15 15"><circle cx="7.500" cy="7.500" r="7" fill="#2b8f86"></circle><path fill="none" stroke="#e8f6f4" stroke-width="2" d="M10.500 9.500A3.600 3.600 0 1 1 10.500 5.500V7.500H8"></path></svg></span>
        <span><svg width="14" height="14" viewBox="0 0 14 14"><path fill="#c89a78" d="M0 1L10 0L13.500 2V14H3L0 12Z"></path><path fill="none" stroke="#2c4a70" stroke-width="1.600" d="M2 4L4 10L6 5L8 10L10 4"></path></svg></span>
        <span><svg width="16" height="12" viewBox="0 0 16 12"><path class="w" d="M1 1V4H5V1M3 4V7H6M6 3.500H14.500V11H4.500V8"></path><path fill="#dcdcdc" d="M7 5.500H13V9.500H7Z"></path></svg></span>
        <span><svg width="16" height="14" viewBox="0 0 16 14"><path class="w" d="M6 2H15V9.500H4V5M7 12.500H13M10 9.500V12.500M1 1H4.500V5H1ZM2.500 5V13"></path></svg></span>
        <span><svg width="16" height="12" viewBox="0 0 16 12"><path class="w" d="M1 4H3L6 1V11L3 8H1ZM8.500 4Q9.500 6 8.500 8M11 2.500Q13 6 11 9.500M13 1Q16.500 6 13 11"></path></svg></span>
        <span><svg width="22" height="13" viewBox="0 0 22 13"><path class="w" d="M1 1H21V12H1Z"></path><path class="w" stroke-dasharray="1.500 1" d="M3.500 4H18.500M3.500 6.500H18.500"></path><path class="w" d="M6 9.300H16"></path></svg></span>
        <div class="clock">1:04 PM</div>
        <span class="note"><svg width="16" height="16" viewBox="0 0 16 16"><path class="w" d="M1 1H15V12H10.500L8 15L5.500 12H1Z"></path></svg></span>
      </div>
    </div>`;
  }

  render() {
    return html`
      <div class="desktop">
        <div class="caption">
          <svg width="10" height="11"><path d="M0 6.500H10"></path></svg>
          <svg width="11" height="11"><path d="M1 3H8V10H1ZM3 3V1H10V8H8"></path></svg>
          <svg width="11" height="11"><path d="M.5 .5L10.500 10.500M10.500 .5L.5 10.500"></path></svg>
        </div>
        <div class="arrange"><div class="tracks"></div><div class="lanes"></div></div>
        <div class="foot">
          <div class="tg">M</div>
          <div class="tg">S</div>
          <div class="tg"><svg width="11" height="11" viewBox="0 0 11 11"><path fill="none" stroke="#5f93b0" stroke-width="1.700" d="M3.500 1.500A4.300 4.300 0 1 0 7.500 1.500M5.500 .5V5.500"></path></svg></div>
          <span class="mode">Normal</span>
          <svg width="54" height="10" viewBox="0 0 54 10"><path class="ic" d="M0 3H8L4 8ZM20 1.500H28V3H20ZM20 4.500H28V6H20ZM20 7.500H28V9H20ZM47 1V9L41 5Z"></path></svg>
          <div class="thumb"></div>
          <div class="fill"></div>
          <svg width="124" height="12" viewBox="0 0 124 12"><path class="ic" d="M1 2V10L6.500 6ZM17 9.500L21.500 3L26 9.500ZM27 5.500H90V6.500H27ZM43 1H47V11H43ZM95 10.500L101 1.500L107 10.500ZM116 9H118V11H116ZM119 9H121V11H119ZM119 5H121V7H119Z"></path></svg>
        </div>
        ${this.renderTransport()}
        <div class="base"></div>
        ${this.renderTaskbar()}
      </div>
      <meter-window></meter-window>
      <synth-window></synth-window>
      <svg class="cursor" width="13" height="19" viewBox="0 0 13 19">
        <path fill="#f4f4f4" stroke="#33353a" stroke-width=".8" d="M.7 .8V15L4 12L6.200 17.300L8.800 16.200L6.600 11.200H11Z"></path>
      </svg>
    `;
  }
}
